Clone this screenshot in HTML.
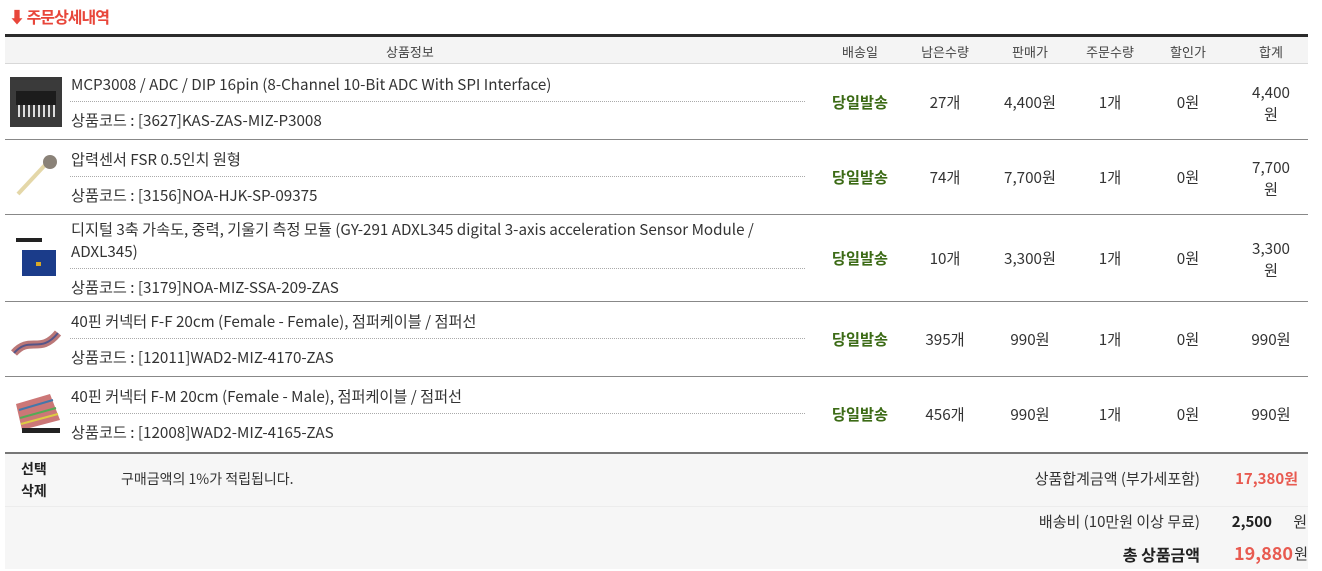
<!DOCTYPE html>
<html><head><meta charset="utf-8"><style>
*{margin:0;padding:0;box-sizing:border-box}
body{width:1322px;height:571px;background:#fff;font-family:"Noto Sans CJK KR","Liberation Sans",sans-serif;color:#333;position:relative;overflow:hidden;font-size:14px}
.a{position:absolute;white-space:nowrap;line-height:20px}
.n{font-size:15.2px}
.c{text-align:center}
.title{left:9px;top:6px;color:#e8463a;font-weight:bold;font-size:16px;letter-spacing:-1px}
.topbar{position:absolute;left:5px;top:34px;width:1303px;height:3px;background:#2b2b2b}
.head{position:absolute;left:5px;top:37px;width:1303px;height:27px;background:#f4f4f4;border-bottom:1px solid #d8d8d8}
.h{font-size:13px;color:#444;top:42px}
.row{position:absolute;left:5px;width:1303px;border-bottom:1px solid #888}
.dot{position:absolute;left:70px;width:735px;border-top:1px dotted #aaa}
.g{color:#3c6b16;font-weight:bold}
.foot{position:absolute;left:5px;top:452px;width:1303px;height:117px;background:#f6f6f6;border-top:2px solid #777}
.foot2{position:absolute;left:5px;top:506px;width:1303px;height:1px;background:#ececec}
.red{color:#e85a50;font-weight:bold}
</style></head><body>
<div class="a title">⬇ 주문상세내역</div>
<div class="topbar"></div>
<div class="head"></div>
<div class="a h" style="left:386px">상품정보</div>
<div class="a h c" style="left:820px;width:80px">배송일</div>
<div class="a h c" style="left:905px;width:80px">남은수량</div>
<div class="a h c" style="left:990px;width:80px">판매가</div>
<div class="a h c" style="left:1070px;width:80px">주문수량</div>
<div class="a h c" style="left:1150px;width:76px">할인가</div>
<div class="a h c" style="left:1235px;width:72px">합계</div>

<div class="row" style="top:64px;height:76px"></div>
<div class="row" style="top:140px;height:75px"></div>
<div class="row" style="top:215px;height:87px"></div>
<div class="row" style="top:302px;height:75px"></div>

<svg class="a" style="left:10px;top:77px" width="52" height="50"><rect width="52" height="50" fill="#3a3a3a"/><rect x="6" y="14" width="40" height="14" fill="#1c1c1c"/><g stroke="#ddd" stroke-width="2"><line x1="9" y1="28" x2="9" y2="40"/><line x1="14" y1="28" x2="14" y2="40"/><line x1="19" y1="28" x2="19" y2="40"/><line x1="24" y1="28" x2="24" y2="40"/><line x1="29" y1="28" x2="29" y2="40"/><line x1="34" y1="28" x2="34" y2="40"/><line x1="39" y1="28" x2="39" y2="40"/><line x1="44" y1="28" x2="44" y2="40"/></g></svg>
<svg class="a" style="left:10px;top:152px" width="52" height="50"><line x1="8" y1="42" x2="36" y2="12" stroke="#e4d7a8" stroke-width="4"/><circle cx="40" cy="10" r="7" fill="#8a8278"/></svg>
<svg class="a" style="left:10px;top:232px" width="52" height="50"><rect x="6" y="6" width="26" height="4" fill="#222"/><rect x="12" y="18" width="34" height="26" fill="#1b3c8a"/><rect x="26" y="30" width="5" height="4" fill="#d9a826"/></svg>
<svg class="a" style="left:10px;top:315px" width="52" height="50"><path d="M4 38 C20 20 30 40 48 18" stroke="#b77" stroke-width="8" fill="none"/><path d="M4 38 C20 20 30 40 48 18" stroke="#558" stroke-width="2" fill="none"/></svg>
<svg class="a" style="left:10px;top:390px" width="52" height="50"><path d="M6 14 L40 4 L50 30 L12 40 Z" fill="#c77"/><g stroke-width="2"><line x1="9" y1="20" x2="43" y2="10" stroke="#47a"/><line x1="10" y1="28" x2="46" y2="18" stroke="#5a5"/><line x1="11" y1="34" x2="48" y2="24" stroke="#dc4"/></g><rect x="12" y="38" width="38" height="5" fill="#222"/></svg>

<div class="a n" style="left:71px;top:74px">MCP3008 / ADC / DIP 16pin (8-Channel 10-Bit ADC With SPI Interface)</div>
<div class="dot" style="top:101px"></div>
<div class="a n" style="left:71px;top:110px">상품코드 : [3627]KAS-ZAS-MIZ-P3008</div>

<div class="a n" style="left:71px;top:149px">압력센서 FSR 0.5인치 원형</div>
<div class="dot" style="top:176px"></div>
<div class="a n" style="left:71px;top:185px">상품코드 : [3156]NOA-HJK-SP-09375</div>

<div class="a n" style="left:71px;top:219px">디지털 3축 가속도, 중력, 기울기 측정 모듈 (GY-291 ADXL345 digital 3-axis acceleration Sensor Module /</div>
<div class="a n" style="left:71px;top:241px">ADXL345)</div>
<div class="dot" style="top:268px"></div>
<div class="a n" style="left:71px;top:277px">상품코드 : [3179]NOA-MIZ-SSA-209-ZAS</div>

<div class="a n" style="left:71px;top:311px">40핀 커넥터 F-F 20cm (Female - Female), 점퍼케이블 / 점퍼선</div>
<div class="dot" style="top:338px"></div>
<div class="a n" style="left:71px;top:347px">상품코드 : [12011]WAD2-MIZ-4170-ZAS</div>

<div class="a n" style="left:71px;top:386px">40핀 커넥터 F-M 20cm (Female - Male), 점퍼케이블 / 점퍼선</div>
<div class="dot" style="top:413px"></div>
<div class="a n" style="left:71px;top:422px">상품코드 : [12008]WAD2-MIZ-4165-ZAS</div>

<div class="a n c g" style="left:820px;width:80px;top:92px">당일발송</div>
<div class="a n c" style="left:905px;width:80px;top:92px">27개</div>
<div class="a n c" style="left:990px;width:80px;top:92px">4,400원</div>
<div class="a n c" style="left:1070px;width:80px;top:92px">1개</div>
<div class="a n c" style="left:1150px;width:76px;top:92px">0원</div>
<div class="a n c" style="left:1235px;width:72px;top:81px;line-height:22px">4,400<br>원</div>

<div class="a n c g" style="left:820px;width:80px;top:167px">당일발송</div>
<div class="a n c" style="left:905px;width:80px;top:167px">74개</div>
<div class="a n c" style="left:990px;width:80px;top:167px">7,700원</div>
<div class="a n c" style="left:1070px;width:80px;top:167px">1개</div>
<div class="a n c" style="left:1150px;width:76px;top:167px">0원</div>
<div class="a n c" style="left:1235px;width:72px;top:156px;line-height:22px">7,700<br>원</div>

<div class="a n c g" style="left:820px;width:80px;top:248px">당일발송</div>
<div class="a n c" style="left:905px;width:80px;top:248px">10개</div>
<div class="a n c" style="left:990px;width:80px;top:248px">3,300원</div>
<div class="a n c" style="left:1070px;width:80px;top:248px">1개</div>
<div class="a n c" style="left:1150px;width:76px;top:248px">0원</div>
<div class="a n c" style="left:1235px;width:72px;top:237px;line-height:22px">3,300<br>원</div>

<div class="a n c g" style="left:820px;width:80px;top:329px">당일발송</div>
<div class="a n c" style="left:905px;width:80px;top:329px">395개</div>
<div class="a n c" style="left:990px;width:80px;top:329px">990원</div>
<div class="a n c" style="left:1070px;width:80px;top:329px">1개</div>
<div class="a n c" style="left:1150px;width:76px;top:329px">0원</div>
<div class="a n c" style="left:1235px;width:72px;top:329px">990원</div>

<div class="a n c g" style="left:820px;width:80px;top:404px">당일발송</div>
<div class="a n c" style="left:905px;width:80px;top:404px">456개</div>
<div class="a n c" style="left:990px;width:80px;top:404px">990원</div>
<div class="a n c" style="left:1070px;width:80px;top:404px">1개</div>
<div class="a n c" style="left:1150px;width:76px;top:404px">0원</div>
<div class="a n c" style="left:1235px;width:72px;top:404px">990원</div>

<div class="foot"></div>
<div class="foot2"></div>
<div class="a" style="left:21px;top:458px;font-weight:bold;color:#222;line-height:22px">선택<br>삭제</div>
<div class="a" style="left:121px;top:469px">구매금액의 1%가 적립됩니다.</div>
<div class="a" style="right:122px;top:469px;font-size:15px">상품합계금액 (부가세포함)</div>
<div class="a red" style="right:24px;top:469px;font-size:15px">17,380원</div>
<div class="a" style="right:122px;top:512px;font-size:15px">배송비 (10만원 이상 무료)</div>
<div class="a" style="right:50px;top:512px;font-weight:bold;color:#222;font-size:15px">2,500</div>
<div class="a" style="right:15px;top:512px;font-size:15px">원</div>
<div class="a" style="right:122px;top:544px;font-weight:bold;color:#222;font-size:16px">총 상품금액</div>
<div class="a red" style="right:29px;top:543px;font-size:18px">19,880</div>
<div class="a" style="right:14px;top:544px;font-size:15px">원</div>
</body></html>
